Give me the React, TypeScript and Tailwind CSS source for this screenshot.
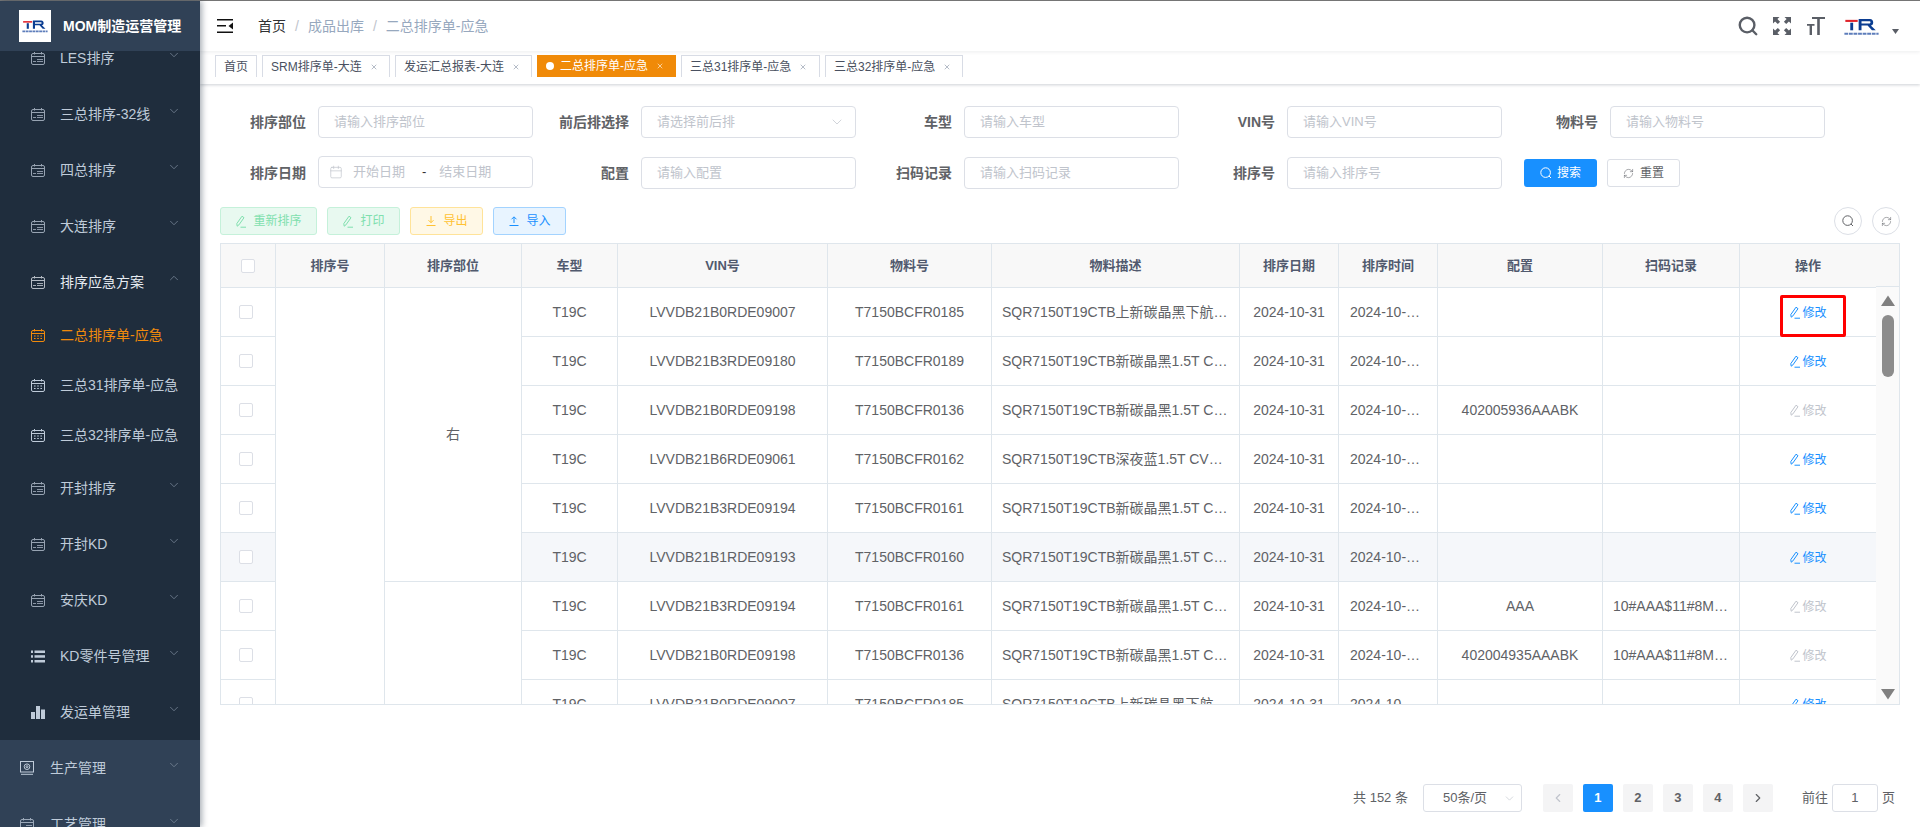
import React from "react";
import { ChevronDown, ChevronUp, ChevronLeft, ChevronRight, Search, RefreshCw, Calendar, X } from "lucide-react";

const FONT = "font-['Liberation_Sans','Noto_Sans_CJK_SC',sans-serif]";

function Cal({ variant = "dots", className = "" }: { variant?: "dots" | "lines"; className?: string }) {
  return (
    <svg viewBox="0 0 14 13" className={`w-[14px] h-[13px] shrink-0 ${className}`} fill="none" stroke="currentColor" strokeWidth="1">
      <rect x="0.5" y="1.5" width="13" height="11" rx="1.5" />
      <path d="M3.5 0v2.5M10.5 0v2.5" />
      <path d="M0.5 4.5h13" />
      {variant === "dots" ? (
        <path d="M3 7h1.6M6.2 7h1.6M9.4 7h1.6M3 9.5h1.6M6.2 9.5h1.6M9.4 9.5h1.6" strokeWidth="1.2" />
      ) : (
        <path d="M2 9.5h3M6 9.5h6M6 7.5h6" strokeWidth="0.9" />
      )}
    </svg>
  );
}

function ListIcon() {
  return (
    <svg viewBox="0 0 14 13" className="w-[14px] h-[13px] shrink-0" fill="currentColor">
      <rect x="0" y="0.5" width="2" height="2.5" />
      <rect x="3.5" y="0.5" width="10.5" height="2.5" />
      <rect x="0" y="5.2" width="2" height="2.5" />
      <rect x="3.5" y="5.2" width="10.5" height="2.5" />
      <rect x="0" y="10" width="2" height="2.5" />
      <rect x="3.5" y="10" width="10.5" height="2.5" />
    </svg>
  );
}

function BarsIcon() {
  return (
    <svg viewBox="0 0 14 13" className="w-[14px] h-[13px] shrink-0" fill="currentColor">
      <rect x="0" y="6" width="4" height="7" />
      <rect x="5" y="0" width="4" height="13" />
      <rect x="10" y="3.5" width="4" height="9.5" />
    </svg>
  );
}

function MonitorIcon() {
  return (
    <svg viewBox="0 0 14 14" className="w-[14px] h-[14px] shrink-0" fill="none" stroke="currentColor" strokeWidth="1">
      <rect x="0.5" y="0.5" width="13" height="10.5" />
      <path d="M1 13.3h12" />
      <circle cx="7" cy="5.7" r="2.8" />
      <circle cx="7" cy="5.7" r="1" />
    </svg>
  );
}

function Edit({ className = "" }: { className?: string }) {
  return (
    <svg viewBox="0 0 12 13" className={`w-[12px] h-[13px] shrink-0 ${className}`} fill="none" stroke="currentColor" strokeWidth="1">
      <path d="M2.2 11.2 1.8 8.6 7 1.2l2 1.5-5.1 7.2z" />
      <path d="M5.5 12.2h5.5" />
    </svg>
  );
}

function Down({ up = false }: { up?: boolean }) {
  return (
    <svg viewBox="0 0 12 12" className="w-[12px] h-[12px] shrink-0" fill="none" stroke="currentColor" strokeWidth="1">
      {up ? <path d="M6 8V2M3.5 4.3 6 1.8l2.5 2.5M1.5 10.5h9" /> : <path d="M6 1v6.5M3.5 5.2 6 7.7l2.5-2.5M1.5 10.5h9" />}
    </svg>
  );
}

function ElSearch({ className = "" }: { className?: string }) {
  return (
    <svg viewBox="0 0 12 12" className={`w-[12px] h-[12px] shrink-0 ${className}`} fill="none" stroke="currentColor" strokeWidth="1">
      <circle cx="5.6" cy="5.6" r="4.8" />
      <path d="m9 9 2 2" />
    </svg>
  );
}

function Logo({ className = "" }: { className?: string }) {
  return (
    <svg viewBox="0 0 36 20" className={className}>
      <rect x="1" y="3" width="13" height="2.2" fill="#e0242c" />
      <rect x="6.2" y="6" width="3" height="8" fill="#0b3d91" />
      <path d="M15 14V2h12c4.2 0 4.5 6.5.8 7L33 14h-4l-4.6-5H18v5zM18 4.6v2.2h8.6c1.2 0 1.2-2.2 0-2.2z" fill="#0b3d91" />
      <path d="M0 17.7h36" stroke="#5d7dbb" strokeWidth="2.2" strokeDasharray="4 0.8" />
    </svg>
  );
}

function FullscreenIcon() {
  return (
    <svg viewBox="0 0 18 18" className="w-[18px] h-[18px]" fill="#5a5e66">
      <path d="M0 0h6.5L4.4 2.1l2.7 2.7-2.3 2.3-2.7-2.7L0 6.5zM18 0v6.5l-2.1-2.1-2.7 2.7-2.3-2.3 2.7-2.7L11.5 0zM0 18v-6.5l2.1 2.1 2.7-2.7 2.3 2.3-2.7 2.7L6.5 18zM18 18h-6.5l2.1-2.1-2.7-2.7 2.3-2.3 2.7 2.7 2.1-2.1z" />
    </svg>
  );
}

function FontSizeIcon() {
  return (
    <svg viewBox="0 0 18 18" className="w-[18px] h-[18px]" fill="#5a5e66">
      <path d="M5 0h13v2h-5.2v16h-2.6V2H5zM0 7h7.5v1.8H5V18H2.6V8.8H0z" />
    </svg>
  );
}

type Item = { label: string; h: string; kind: "lines" | "dots" | "list" | "bars" | "monitor"; active?: boolean; open?: boolean; strong?: boolean; none?: boolean; top?: boolean };

const menu: Item[] = [
  { label: "LES排序", h: "h-[56px]", kind: "lines" },
  { label: "三总排序-32线", h: "h-[56px]", kind: "lines" },
  { label: "四总排序", h: "h-[56px]", kind: "lines" },
  { label: "大连排序", h: "h-[56px]", kind: "lines" },
  { label: "排序应急方案", h: "h-[56px]", kind: "lines", open: true, strong: true },
  { label: "二总排序单-应急", h: "h-[50px]", kind: "dots", active: true, none: true },
  { label: "三总31排序单-应急", h: "h-[50px]", kind: "dots", none: true },
  { label: "三总32排序单-应急", h: "h-[50px]", kind: "dots", none: true },
  { label: "开封排序", h: "h-[56px]", kind: "lines" },
  { label: "开封KD", h: "h-[56px]", kind: "lines" },
  { label: "安庆KD", h: "h-[56px]", kind: "lines" },
  { label: "KD零件号管理", h: "h-[56px]", kind: "list" },
  { label: "发运单管理", h: "h-[56px]", kind: "bars" },
  { label: "生产管理", h: "h-[56px]", kind: "monitor", top: true },
  { label: "工艺管理", h: "h-[56px]", kind: "lines", top: true },
];

function MenuIcon({ kind }: { kind: Item["kind"] }) {
  if (kind === "list") return <ListIcon />;
  if (kind === "bars") return <BarsIcon />;
  if (kind === "monitor") return <MonitorIcon />;
  return <Cal variant={kind === "dots" ? "dots" : "lines"} className={kind === "lines" ? "opacity-75" : ""} />;
}

function Sidebar() {
  return (
    <aside className="w-[200px] h-full shrink-0 bg-[#1f2d3d] overflow-hidden flex flex-col relative z-20 shadow-[2px_0_6px_rgba(0,21,41,0.35)]">
      <div className="h-[50px] shrink-0 bg-[#304156] flex items-center pl-[19px] relative z-10">
        <div className="w-[32px] h-[32px] bg-white flex items-center justify-center">
          <Logo className="w-[26px] h-[14px]" />
        </div>
        <span className="ml-[12px] text-[14px] font-bold text-white whitespace-nowrap">MOM制造运营管理</span>
      </div>
      <div className="-mt-[21px] flex flex-col">
        {menu.map((m) => (
          <div
            key={m.label}
            className={`${m.h} shrink-0 flex items-center relative ${m.top ? "bg-[#304156] pl-[20px]" : "pl-[31px]"} ${m.active ? "text-[#f08a0c]" : m.strong ? "text-[#e6ebf1]" : "text-[#bfcbd9]"}`}
          >
            <MenuIcon kind={m.kind} />
            <span className={`text-[14px] whitespace-nowrap ${m.top ? "ml-[16px]" : "ml-[15px]"}`}>{m.label}</span>
            {!m.none &&
              (m.open ? (
                <ChevronUp className="absolute left-[167px] top-1/2 -translate-y-[11px] w-[14px] h-[14px] text-[#8492a3]" strokeWidth={1.2} />
              ) : (
                <ChevronDown className="absolute left-[167px] top-1/2 -translate-y-[10px] w-[14px] h-[14px] text-[#8492a3]" strokeWidth={1.2} />
              ))}
          </div>
        ))}
      </div>
    </aside>
  );
}

function Navbar() {
  return (
    <header className="h-[50px] shrink-0 flex items-center pl-[17px] pr-[21px] bg-white relative z-10 shadow-[0_1px_4px_rgba(0,21,41,0.08)]">
      <svg viewBox="0 0 16 14" className="w-[16px] h-[14px] shrink-0" fill="#111">
        <rect x="0" y="0" width="16" height="1.5" />
        <rect x="0" y="6" width="9" height="1.5" />
        <path d="M16 3.5v7L11.5 7z" />
        <rect x="0" y="12.5" width="16" height="1.5" />
      </svg>
      <nav className="ml-[25px] flex items-center text-[14px]">
        <span className="text-[#303133]">首页</span>
        <span className="mx-[9px] text-[#c0c4cc]">/</span>
        <span className="text-[#97a8be]">成品出库</span>
        <span className="mx-[9px] text-[#c0c4cc]">/</span>
        <span className="text-[#97a8be]">二总排序单-应急</span>
      </nav>
      <div className="ml-auto flex items-center">
        <Search className="w-[22px] h-[22px] text-[#5a5e66]" strokeWidth={2.6} />
        <div className="ml-[14px]"><FullscreenIcon /></div>
        <div className="ml-[16px]"><FontSizeIcon /></div>
        <Logo className="ml-[19px] w-[35px] h-[19px]" />
        <svg viewBox="0 0 7 5" className="ml-[13px] mt-[10px] w-[7px] h-[5px]" fill="#5a5e66">
          <path d="M0 0h7L3.5 5z" />
        </svg>
      </div>
    </header>
  );
}

const tabs = [
  { t: "首页", w: "w-[42px]", fixed: true },
  { t: "SRM排序单-大连", w: "w-[128px]" },
  { t: "发运汇总报表-大连", w: "w-[137px]" },
  { t: "二总排序单-应急", w: "w-[139px]", active: true },
  { t: "三总31排序单-应急", w: "w-[139px]" },
  { t: "三总32排序单-应急", w: "w-[138px]" },
];

function Tabs() {
  return (
    <div className="h-[33px] shrink-0 pt-[4px] pl-[15px] flex gap-[5px] bg-white relative shadow-[0_1px_3px_rgba(0,21,41,0.2)]">
      {tabs.map((t) => (
        <div
          key={t.t}
          className={`${t.w} h-[22px] pl-[8px] flex items-center text-[12px] whitespace-nowrap ${t.active ? "bg-[#f08a08] text-white pl-[9px]" : "bg-white text-[#495060] border-t border-x border-[#d8dce5]"}`}
        >
          {t.active && <span className="w-[8px] h-[8px] rounded-full bg-white mr-[6px]" />}
          <span>{t.t}</span>
          {!t.fixed && <X className={`ml-[8px] w-[8px] h-[8px] ${t.active ? "text-white/80" : "text-[#9aa3b2]"}`} strokeWidth={2.2} />}
        </div>
      ))}
    </div>
  );
}

function Label({ children }: { children: React.ReactNode }) {
  return <label className="w-[108px] pr-[12px] text-right text-[14px] font-bold text-[#606266] shrink-0 whitespace-nowrap">{children}</label>;
}

function Field({ label, ph, date, select }: { label: string; ph?: string; date?: boolean; select?: boolean }) {
  return (
    <div className="flex items-center w-[323px]">
      <Label>{label}</Label>
      {date ? (
        <div className="w-[215px] h-[32px] -mt-[2px] border border-[#dcdfe6] rounded-[4px] flex items-center text-[13px] text-[#c0c4cc] pl-[10px]">
          <Calendar className="w-[14px] h-[14px]" strokeWidth={1.2} />
          <span className="ml-[10px]">开始日期</span>
          <span className="ml-[17px] text-[#303133]">-</span>
          <span className="ml-[13px]">结束日期</span>
        </div>
      ) : (
        <div className="w-[215px] h-[32px] border border-[#dcdfe6] rounded-[4px] flex items-center text-[13px] text-[#c0c4cc] pl-[15px] pr-[10px]">
          <span>{ph}</span>
          {select && <ChevronDown className="ml-auto w-[16px] h-[16px]" strokeWidth={1.1} />}
        </div>
      )}
    </div>
  );
}

function Filters() {
  return (
    <div className="flex flex-col gap-[19px] -ml-[10px]">
      <div className="flex">
        <Field label="排序部位" ph="请输入排序部位" />
        <Field label="前后排选择" ph="请选择前后排" select />
        <Field label="车型" ph="请输入车型" />
        <Field label="VIN号" ph="请输入VIN号" />
        <Field label="物料号" ph="请输入物料号" />
      </div>
      <div className="flex items-center">
        <Field label="排序日期" date />
        <Field label="配置" ph="请输入配置" />
        <Field label="扫码记录" ph="请输入扫码记录" />
        <Field label="排序号" ph="请输入排序号" />
        <button className="ml-[22px] w-[73px] h-[28px] bg-[#1890ff] rounded-[3px] text-white text-[12px] flex items-center justify-center">
          <ElSearch />
          <span className="ml-[5px]">搜索</span>
        </button>
        <button className="ml-[10px] w-[73px] h-[28px] bg-white border border-[#dcdfe6] rounded-[3px] text-[#606266] text-[12px] flex items-center justify-center">
          <RefreshCw className="w-[11px] h-[11px]" strokeWidth={1.2} />
          <span className="ml-[6px]">重置</span>
        </button>
      </div>
    </div>
  );
}

function Actions() {
  return (
    <div className="mt-[18px] h-[28px] flex items-center">
      <button className="w-[97px] h-[28px] rounded-[3px] text-[12px] flex items-center justify-center border bg-[#e8f9f0] border-[#c5f1da] text-[#7fe0ae]">
        <Edit />
        <span className="ml-[6px]">重新排序</span>
      </button>
      <button className="ml-[10px] w-[73px] h-[28px] rounded-[3px] text-[12px] flex items-center justify-center border bg-[#e8f9f0] border-[#c5f1da] text-[#7fe0ae]">
        <Edit />
        <span className="ml-[6px]">打印</span>
      </button>
      <button className="ml-[10px] w-[73px] h-[28px] rounded-[3px] text-[12px] flex items-center justify-center border bg-[#fff8e6] border-[#ffe399] text-[#ffc233]">
        <Down />
        <span className="ml-[6px]">导出</span>
      </button>
      <button className="ml-[10px] w-[73px] h-[28px] rounded-[3px] text-[12px] flex items-center justify-center border bg-[#e8f4ff] border-[#a3d3ff] text-[#1890ff]">
        <Down up />
        <span className="ml-[6px]">导入</span>
      </button>
      <div className="ml-auto flex gap-[10px]">
        <div className="w-[28px] h-[28px] rounded-full border border-[#dcdfe6] flex items-center justify-center text-[#606266]"><ElSearch /></div>
        <div className="w-[28px] h-[28px] rounded-full border border-[#dcdfe6] flex items-center justify-center text-[#606266]"><RefreshCw className="w-[11px] h-[11px]" strokeWidth={1.2} /></div>
      </div>
    </div>
  );
}

const DESC_A = "SQR7150T19CTB上新碳晶黑下航天灰1.5T CVT豪华型";
const DESC_B = "SQR7150T19CTB新碳晶黑1.5T CVT豪华型国六";
const DESC_C = "SQR7150T19CTB深夜蓝1.5T CVT豪华型国六";

const rows = [
  { vin: "LVVDB21B0RDE09007", mat: "T7150BCFR0185", d: DESC_A, cfg: "", code: "", off: false, boxed: true },
  { vin: "LVVDB21B3RDE09180", mat: "T7150BCFR0189", d: DESC_B, cfg: "", code: "", off: false },
  { vin: "LVVDB21B0RDE09198", mat: "T7150BCFR0136", d: DESC_B, cfg: "402005936AAABK", code: "", off: true },
  { vin: "LVVDB21B6RDE09061", mat: "T7150BCFR0162", d: DESC_C, cfg: "", code: "", off: false },
  { vin: "LVVDB21B3RDE09194", mat: "T7150BCFR0161", d: DESC_B, cfg: "", code: "", off: false },
  { vin: "LVVDB21B1RDE09193", mat: "T7150BCFR0160", d: DESC_B, cfg: "", code: "", off: false, hover: true },
  { vin: "LVVDB21B3RDE09194", mat: "T7150BCFR0161", d: DESC_B, cfg: "AAA", code: "10#AAA$11#8M00291", off: true },
  { vin: "LVVDB21B0RDE09198", mat: "T7150BCFR0136", d: DESC_B, cfg: "402004935AAABK", code: "10#AAA$11#8M00292", off: true },
  { vin: "LVVDB21B0RDE09007", mat: "T7150BCFR0185", d: DESC_A, cfg: "", code: "", off: false },
];

const th = "border border-[#dfe6ec] bg-[#f8f8f8] text-[13px] font-bold text-[#515a6e] text-center px-[10px]";
const td = "border border-[#dfe6ec] text-[14px] text-[#606266] text-center px-[10px] truncate";

function Check({ className = "" }: { className?: string }) {
  return <span className={`block w-[14px] h-[14px] bg-white border border-[#dcdfe6] rounded-[2px] ${className}`} />;
}

function DataTable() {
  return (
    <div className="mt-[8px] h-[462px] flex border-b border-r border-[#dfe6ec]">
      <div className="w-[1656px] overflow-hidden">
        <table className="w-[1656px] table-fixed border-collapse">
          <colgroup>
            <col className="w-[55px]" />
            <col className="w-[109px]" />
            <col className="w-[137px]" />
            <col className="w-[96px]" />
            <col className="w-[210px]" />
            <col className="w-[164px]" />
            <col className="w-[248px]" />
            <col className="w-[99px]" />
            <col className="w-[99px]" />
            <col className="w-[165px]" />
            <col className="w-[137px]" />
            <col className="w-[137px]" />
          </colgroup>
          <thead>
            <tr className="h-[44px]">
              <th className={th}><Check className="mx-auto" /></th>
              <th className={th}>排序号</th>
              <th className={th}>排序部位</th>
              <th className={th}>车型</th>
              <th className={th}>VIN号</th>
              <th className={th}>物料号</th>
              <th className={th}>物料描述</th>
              <th className={th}>排序日期</th>
              <th className={th}>排序时间</th>
              <th className={th}>配置</th>
              <th className={th}>扫码记录</th>
              <th className={th}>操作</th>
            </tr>
          </thead>
          <tbody>
            {rows.map((r, i) => (
              <tr key={i} className={`h-[49px] ${r.hover ? "bg-[#f5f7fa]" : ""}`}>
                <td className={`${td} pr-[14px]`}><Check className="mx-auto" /></td>
                {i === 0 && <td rowSpan={9} className={`${td} bg-white`} />}
                {i === 0 && <td rowSpan={6} className={`${td} bg-white`}>右</td>}
                {i === 6 && <td rowSpan={3} className={`${td} bg-white`} />}
                <td className={td}>T19C</td>
                <td className={td}>{r.vin}</td>
                <td className={td}>{r.mat}</td>
                <td className={`${td} text-left`}>{r.d}</td>
                <td className={td}>2024-10-31</td>
                <td className={`${td} px-[11px]`}>2024-10-31 08:12:45</td>
                <td className={td}>{r.cfg}</td>
                <td className={td}>{r.code}</td>
                <td className={`${td} overflow-visible`}>
                  <span className={`relative inline-flex items-center align-middle text-[12px] ${r.off ? "text-[#c0c4cc]" : "text-[#1890ff]"}`}>
                    <Edit />
                    <span className="ml-[1px]">修改</span>
                    {r.boxed && <span className="absolute -left-[9px] -right-[19px] -top-[9px] -bottom-[15px] border-[3px] border-[#f00] rounded-[2px]" />}
                  </span>
                </td>
              </tr>
            ))}
          </tbody>
        </table>
      </div>
      <div className="w-[23px] flex flex-col items-center bg-[#fafafa]">
        <div className="w-full h-[44px] shrink-0 bg-[#f8f8f8] border-t border-b border-[#dfe6ec]" />
        <svg viewBox="0 0 14 11" className="w-[14px] h-[11px] mt-[8px] shrink-0" fill="#808080">
          <path d="M7 0.5 14 11H0z" />
        </svg>
        <div className="w-[12px] h-[62px] mt-[9px] rounded-full bg-[#8c8c8c] shrink-0" />
        <svg viewBox="0 0 14 11" className="w-[14px] h-[11px] mt-auto mb-[4px] shrink-0" fill="#808080">
          <path d="M7 10.5 0 0h14z" />
        </svg>
      </div>
    </div>
  );
}

function PageBtn({ children, active }: { children: React.ReactNode; active?: boolean }) {
  return (
    <span className={`w-[30px] h-[28px] rounded-[2px] flex items-center justify-center text-[13px] font-bold ${active ? "bg-[#1890ff] text-white" : "bg-[#f4f4f5] text-[#606266]"}`}>
      {children}
    </span>
  );
}

function Pagination() {
  return (
    <div className="mt-[79px] h-[28px] flex items-center justify-end text-[13px] text-[#606266] pr-[5px]">
      <span>共 152 条</span>
      <div className="ml-[15px] w-[99px] h-[28px] border border-[#dcdfe6] rounded-[3px] flex items-center pl-[19px] pr-[5px]">
        <span>50条/页</span>
        <ChevronDown className="ml-auto w-[13px] h-[13px] text-[#c0c4cc]" strokeWidth={1.2} />
      </div>
      <div className="ml-[21px] flex gap-[10px]">
        <PageBtn><ChevronLeft className="w-[14px] h-[14px] text-[#c0c4cc]" strokeWidth={2} /></PageBtn>
        <PageBtn active>1</PageBtn>
        <PageBtn>2</PageBtn>
        <PageBtn>3</PageBtn>
        <PageBtn>4</PageBtn>
        <PageBtn><ChevronRight className="w-[14px] h-[14px]" strokeWidth={2} /></PageBtn>
      </div>
      <span className="ml-[29px]">前往</span>
      <div className="ml-[4px] w-[46px] h-[28px] border border-[#dcdfe6] rounded-[3px] flex items-center justify-center">1</div>
      <span className="ml-[4px]">页</span>
    </div>
  );
}

export default function App() {
  return (
    <div className={`${FONT} w-[1920px] h-[827px] overflow-hidden flex flex-col bg-white`}>
      <div className="h-px shrink-0 bg-[#777]" />
      <div className="flex-1 min-h-0 flex">
        <Sidebar />
        <main className="flex-1 min-w-0 flex flex-col">
          <Navbar />
          <Tabs />
          <div className="pt-[22px] pl-[20px] pr-[20px]">
            <Filters />
            <Actions />
            <DataTable />
            <Pagination />
          </div>
        </main>
      </div>
    </div>
  );
}
